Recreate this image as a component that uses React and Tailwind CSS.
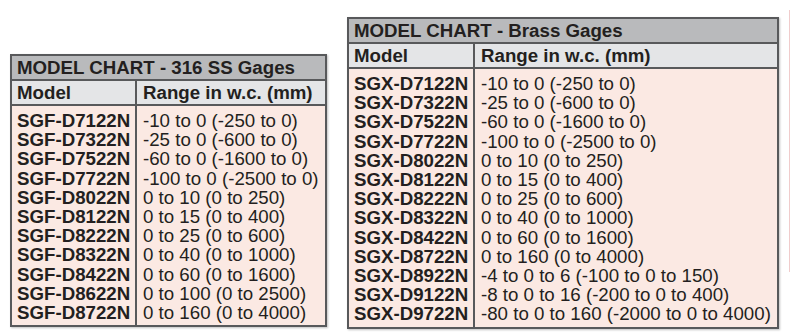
const ssRows = [
  ["SGF-D7122N", "-10 to 0 (-250 to 0)"],
  ["SGF-D7322N", "-25 to 0 (-600 to 0)"],
  ["SGF-D7522N", "-60 to 0 (-1600 to 0)"],
  ["SGF-D7722N", "-100 to 0 (-2500 to 0)"],
  ["SGF-D8022N", "0 to 10 (0 to 250)"],
  ["SGF-D8122N", "0 to 15 (0 to 400)"],
  ["SGF-D8222N", "0 to 25 (0 to 600)"],
  ["SGF-D8322N", "0 to 40 (0 to 1000)"],
  ["SGF-D8422N", "0 to 60 (0 to 1600)"],
  ["SGF-D8622N", "0 to 100 (0 to 2500)"],
  ["SGF-D8722N", "0 to 160 (0 to 4000)"],
];

const brassRows = [
  ["SGX-D7122N", "-10 to 0 (-250 to 0)"],
  ["SGX-D7322N", "-25 to 0 (-600 to 0)"],
  ["SGX-D7522N", "-60 to 0 (-1600 to 0)"],
  ["SGX-D7722N", "-100 to 0 (-2500 to 0)"],
  ["SGX-D8022N", "0 to 10 (0 to 250)"],
  ["SGX-D8122N", "0 to 15 (0 to 400)"],
  ["SGX-D8222N", "0 to 25 (0 to 600)"],
  ["SGX-D8322N", "0 to 40 (0 to 1000)"],
  ["SGX-D8422N", "0 to 60 (0 to 1600)"],
  ["SGX-D8722N", "0 to 160 (0 to 4000)"],
  ["SGX-D8922N", "-4 to 0 to 6 (-100 to 0 to 150)"],
  ["SGX-D9122N", "-8 to 0 to 16 (-200 to 0 to 400)"],
  ["SGX-D9722N", "-80 to 0 to 160 (-2000 to 0 to 4000)"],
];

function ModelChart({ title, rows, width, colWidth }) {
  return (
    <div
      className={`border-2 border-[#58595b] text-[#231f20] shadow-[1px_1px_2px_rgba(0,0,0,0.25)] ${width}`}
    >
      <div className="h-[25px] bg-[#b9babc] border-b-2 border-[#58595b] pl-[5px] font-bold text-[18.7px] leading-[23px]">
        {title}
      </div>
      <div className="flex h-[25px] bg-[#e4e5e7] border-b-2 border-[#58595b] font-bold text-[18.7px] leading-[23px]">
        <div className={`border-r-2 border-[#58595b] pl-[5px] ${colWidth}`}>Model</div>
        <div className="pl-[6px]">Range in w.c. (mm)</div>
      </div>
      <div className="flex bg-[#fbe9e3] text-[18.7px] leading-[19.2px]">
        <div className={`border-r-2 border-[#58595b] pl-[5px] pt-[5px] pb-[3px] font-bold ${colWidth}`}>
          {rows.map(([model]) => (
            <div key={model}>{model}</div>
          ))}
        </div>
        <div className="pl-[6px] pt-[5px] pb-[3px] whitespace-nowrap">
          {rows.map(([model, range]) => (
            <div key={model}>{range}</div>
          ))}
        </div>
      </div>
    </div>
  );
}

export default function App() {
  return (
    <div
      className="w-[792px] h-[334px] bg-white flex"
      style={{ fontFamily: '"Liberation Sans", Arial, sans-serif' }}
    >
      <div className="ml-[10px] mt-[54px]">
        <ModelChart
          title="MODEL CHART - 316 SS Gages"
          rows={ssRows}
          width="w-[317px]"
          colWidth="w-[125px]"
        />
      </div>
      <div className="ml-[20px] mt-[17px]">
        <ModelChart
          title="MODEL CHART - Brass Gages"
          rows={brassRows}
          width="w-[432px]"
          colWidth="w-[126px]"
        />
      </div>
      <div className="ml-[10px] mt-[10px] h-[262px] w-px bg-[#f0cccc]" />
    </div>
  );
}
